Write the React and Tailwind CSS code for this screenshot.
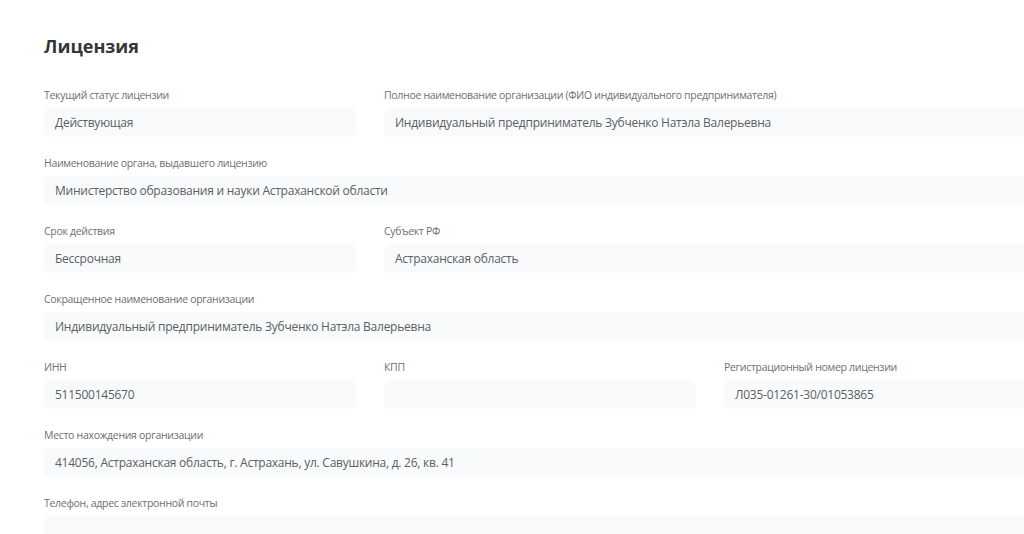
export default function App() {
  const Field = ({ label, value, span }) => (
    <div className={span ? "col-span-3" : ""}>
      <div className="text-[10.5px] leading-[15px] text-[#6b7074] tracking-[-0.3px] mb-[5px]">{label}</div>
      <div className="h-[29px] rounded-[5px] bg-[#f8fafb] px-[11px] flex items-center text-[12px] tracking-[-0.25px] text-[#5a5f63]">
        {value}
      </div>
    </div>
  );
  return (
    <div className="w-[1024px] h-[534px] overflow-hidden bg-white" style={{ fontFamily: '"Open Sans", "Noto Sans", sans-serif' }}>
      <div className="pl-[44px] pt-[34px] w-[1060px]">
        <h1 className="text-[18px] leading-[24px] font-bold text-[#333638] mb-[30px]">Лицензия</h1>
        <div className="grid grid-cols-[312px_312px_312px] gap-x-[28px] gap-y-[19px]">
          <Field label="Текущий статус лицензии" value="Действующая" />
          <div className="col-span-2">
            <Field label="Полное наименование организации (ФИО индивидуального предпринимателя)" value="Индивидуальный предприниматель Зубченко Натэла Валерьевна" />
          </div>
          <Field span label="Наименование органа, выдавшего лицензию" value="Министерство образования и науки Астраханской области" />
          <Field label="Срок действия" value="Бессрочная" />
          <div className="col-span-2">
            <Field label="Субъект РФ" value="Астраханская область" />
          </div>
          <Field span label="Сокращенное наименование организации" value="Индивидуальный предприниматель Зубченко Натэла Валерьевна" />
          <Field label="ИНН" value="511500145670" />
          <Field label="КПП" value="" />
          <Field label="Регистрационный номер лицензии" value="Л035-01261-30/01053865" />
          <Field span label="Место нахождения организации" value="414056, Астраханская область, г. Астрахань, ул. Савушкина, д. 26, кв. 41" />
          <Field span label="Телефон, адрес электронной почты" value="" />
        </div>
      </div>
    </div>
  );
}
